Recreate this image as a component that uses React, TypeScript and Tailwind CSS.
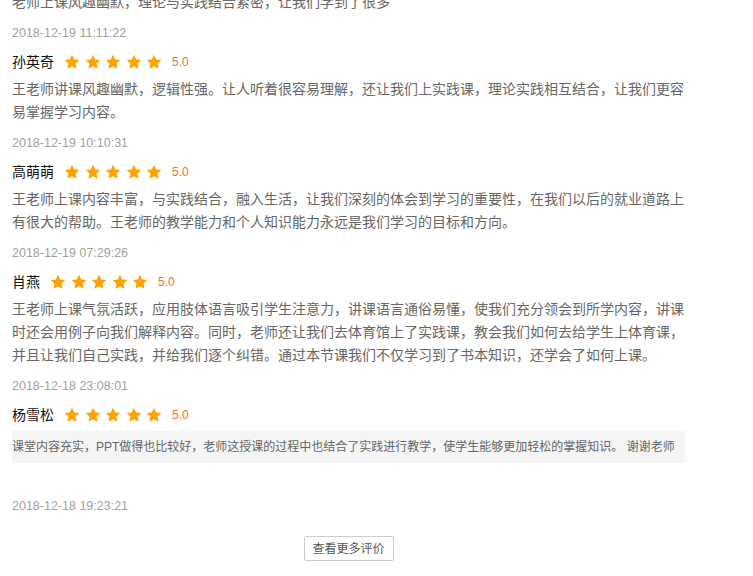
const reviews = [
  {
    name: '孙英奇',
    date: '2018-12-19 11:11:22',
    text: '王老师讲课风趣幽默，逻辑性强。让人听着很容易理解，还让我们上实践课，理论实践相互结合，让我们更容易掌握学习内容。',
  },
  {
    name: '高萌萌',
    date: '2018-12-19 10:10:31',
    text: '王老师上课内容丰富，与实践结合，融入生活，让我们深刻的体会到学习的重要性，在我们以后的就业道路上有很大的帮助。王老师的教学能力和个人知识能力永远是我们学习的目标和方向。',
  },
  {
    name: '肖燕',
    date: '2018-12-19 07:29:26',
    text: '王老师上课气氛活跃，应用肢体语言吸引学生注意力，讲课语言通俗易懂，使我们充分领会到所学内容，讲课时还会用例子向我们解释内容。同时，老师还让我们去体育馆上了实践课，教会我们如何去给学生上体育课，并且让我们自己实践，并给我们逐个纠错。通过本节课我们不仅学习到了书本知识，还学会了如何上课。',
  },
  {
    name: '杨雪松',
    date: '2018-12-18 23:08:01',
    text: '课堂内容充实，PPT做得也比较好，老师这授课的过程中也结合了实践进行教学，使学生能够更加轻松的掌握知识。 谢谢老师',
    boxed: true,
  },
];

const font = { fontFamily: '"Liberation Sans", "Noto Sans CJK SC", sans-serif' };

function Star() {
  return (
    <svg viewBox="0 0 24 24" className="w-4 h-4">
      <path
        d="M12 1.2l3.3 7 7.6.9-5.6 5.3 1.5 7.6L12 18.2l-6.8 3.8 1.5-7.6L1.1 9.1l7.6-.9z"
        fill="#ffa200"
      />
    </svg>
  );
}

function Rating({ name }: { name: string }) {
  return (
    <div className="mt-[9px] h-5 flex items-center">
      <span className="text-[14px] leading-5 text-[#111]">{name}</span>
      <div className="ml-[10px] flex items-center gap-[4.5px]">
        {[0, 1, 2, 3, 4].map((i) => (
          <Star key={i} />
        ))}
      </div>
      <span className="ml-[10px] text-[12px] text-[#ff6a2a]">5.0</span>
    </div>
  );
}

export default function App() {
  return (
    <div className="min-h-screen bg-white overflow-hidden" style={font}>
      <div className="w-[673px] ml-[12px] -mt-[9px]">
        {/* tail of the previous comment */}
        <p className="text-[14px] leading-[23px] text-[#666]">
          老师上课风趣幽默，理论与实践结合紧密，让我们学到了很多
        </p>

        {reviews.map((r) => (
          <div key={r.date} className="mt-[9px]">
            <div className="text-[12.5px] leading-5 text-[#a0a0a0]">{r.date}</div>
            <Rating name={r.name} />
            {r.boxed ? (
              <div className="mt-[6px] h-8 flex items-center bg-[#f5f5f5] text-[12px] text-[#666] whitespace-nowrap">
                {r.text}
              </div>
            ) : (
              <p className="mt-[6px] text-[14px] leading-[23px] text-[#666]">{r.text}</p>
            )}
          </div>
        ))}

        <div className="mt-[33px] text-[12.5px] leading-5 text-[#a0a0a0]">2018-12-18 19:23:21</div>

        <div className="mt-5 flex justify-center">
          <button className="w-[90px] h-[25px] border border-[#ccc] rounded-[2px] bg-white text-[12px] text-[#555]">
            查看更多评价
          </button>
        </div>
      </div>
    </div>
  );
}
